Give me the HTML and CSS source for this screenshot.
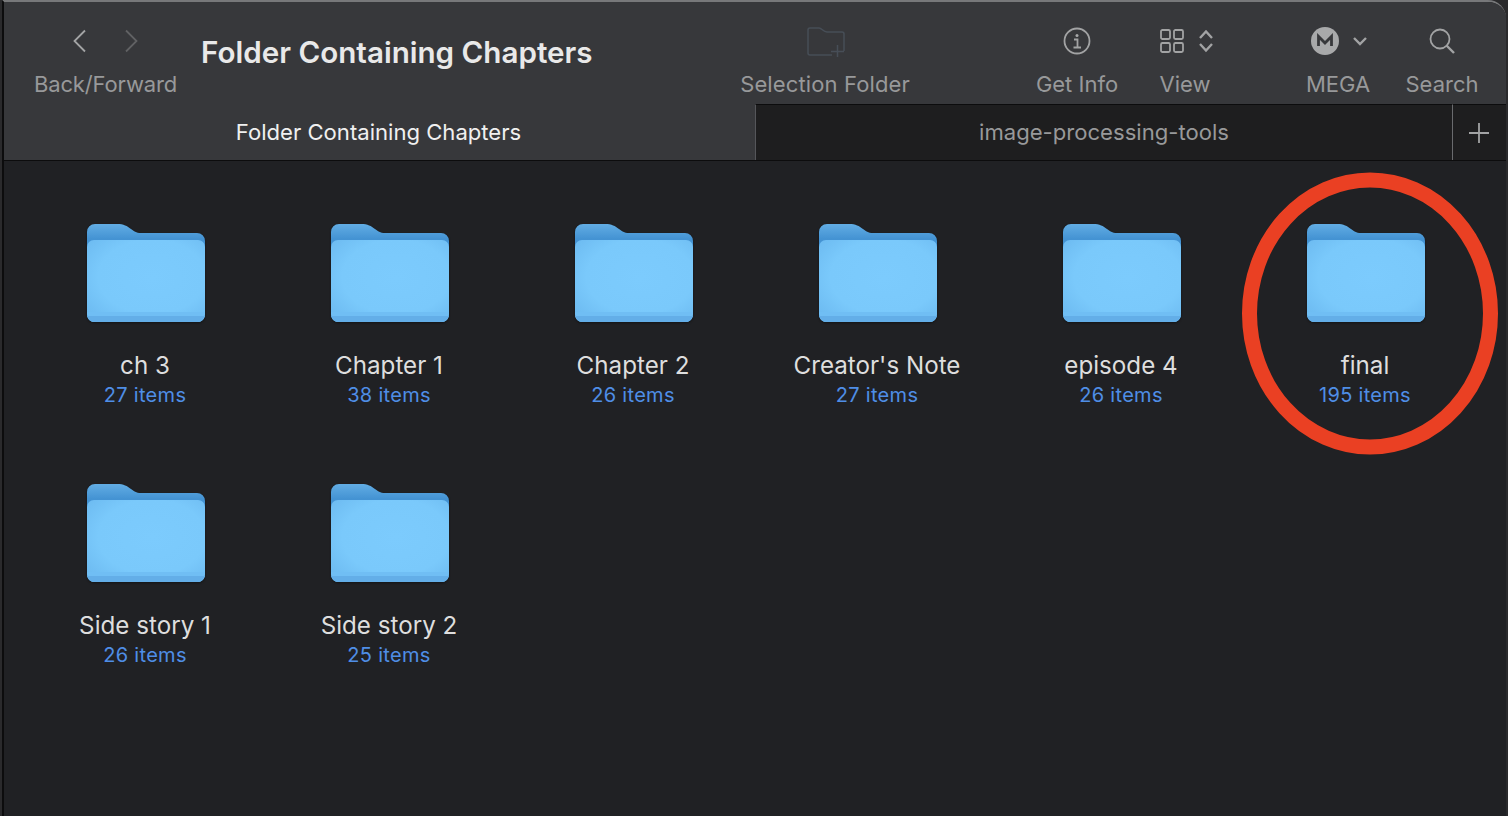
FILE: index.html
```html
<!DOCTYPE html>
<html lang="en">
<head>
  <meta charset="UTF-8">
  <title>Folder Containing Chapters</title>
  <link rel="stylesheet" href="styles.css">
</head>
<body>
  <svg class="defs" width="0" height="0">
    <defs>
      <linearGradient id="backGrad" x1="0" y1="0" x2="0" y2="1">
        <stop offset="0" stop-color="#62ade4"/>
        <stop offset="0.25" stop-color="#4493d3"/>
      </linearGradient>
      <radialGradient id="frontGrad" cx="0.55" cy="0.45" r="0.7">
        <stop offset="0" stop-color="#7ccbfd"/>
        <stop offset="0.65" stop-color="#7ac9fb"/>
        <stop offset="1" stop-color="#6dbbf1"/>
      </radialGradient>
      <symbol id="folder" viewBox="0 0 118 100">
        <path d="M0 9A8 8 0 0 1 8 1H30C37 1 40 3 44 6C47 8 49 10 54 10H110A8 8 0 0 1 118 18V60H0Z" fill="url(#backGrad)"/>
        <path d="M0 24A7 7 0 0 1 7 17H111A7 7 0 0 1 118 24V91A8 8 0 0 1 110 99H8A8 8 0 0 1 0 91Z" fill="url(#frontGrad)"/>
        <path d="M0 89H118V91A8 8 0 0 1 110 99H8A8 8 0 0 1 0 91Z" fill="#70bef4"/>
        <path d="M0 93H118A8 8 0 0 1 110 99H8A8 8 0 0 1 0 93Z" fill="#63aee8"/>
      </symbol>
    </defs>
  </svg>

  <div class="window">
    <header class="toolbar">
      <div class="tool tool-nav">
        <div class="tool-icon nav-icons">
          <svg width="16" height="24" viewBox="0 0 16 24"><path d="M13 1.500L2.500 12L13 22.500" class="stroke-light"/></svg>
          <svg width="16" height="24" viewBox="0 0 16 24"><path d="M3 1.500L13.500 12L3 22.500" class="stroke-dim"/></svg>
        </div>
        <span class="tool-label">Back/Forward</span>
      </div>
      <h1 class="window-title">Folder Containing Chapters</h1>
      <div class="tool tool-selection">
        <div class="tool-icon selection-icon">
          <svg width="38" height="32" viewBox="0 0 38 32"><path d="M25 28H3Q1 28 1 26V3Q1 1 3 1H12C15 1 16 5 20 5H35Q37 5 37 7V24M24 24.500H37M30.500 18V30" class="stroke-folder"/></svg>
        </div>
        <span class="tool-label">Selection Folder</span>
      </div>
      <div class="tool tool-info">
        <div class="tool-icon">
          <svg width="28" height="28" viewBox="0 0 28 28"><circle cx="14" cy="14" r="12.500" class="stroke-light"/><circle cx="14" cy="8.500" r="1.500" class="fill-light"/><path d="M11 12.500H14.500V20M10.500 20.500H18" class="stroke-light"/></svg>
        </div>
        <span class="tool-label">Get Info</span>
      </div>
      <div class="tool tool-view">
        <div class="tool-icon view-icons">
          <svg width="24" height="24" viewBox="0 0 24 24"><rect x="1" y="1" width="9" height="9" rx="1.500" class="stroke-light"/><rect x="14" y="1" width="9" height="9" rx="1.500" class="stroke-light"/><rect x="1" y="14" width="9" height="9" rx="1.500" class="stroke-light"/><rect x="14" y="14" width="9" height="9" rx="1.500" class="stroke-light"/></svg>
          <svg width="16" height="24" viewBox="0 0 16 24"><path d="M2 9L8 2.500L14 9M2 15L8 21.500L14 15" class="stroke-bold"/></svg>
        </div>
        <span class="tool-label">View</span>
      </div>
      <div class="tool tool-mega">
        <div class="tool-icon mega-icons">
          <svg width="28" height="28" viewBox="0 0 28 28"><circle cx="14" cy="14" r="14" class="fill-light"/><path d="M7.500 19V9.500L14 16L20.500 9.500V19" class="stroke-mega"/></svg>
          <svg width="14" height="10" viewBox="0 0 14 10"><path d="M1 2L7 8L13 2" class="stroke-bold"/></svg>
        </div>
        <span class="tool-label">MEGA</span>
      </div>
      <div class="tool tool-search">
        <div class="tool-icon">
          <svg width="26" height="26" viewBox="0 0 26 26"><circle cx="11" cy="11" r="9.500" class="stroke-light"/><path d="M17.500 17.500L25 25" class="stroke-bold"/></svg>
        </div>
        <span class="tool-label">Search</span>
      </div>
    </header>

    <nav class="tabbar">
      <div class="tab tab-active">Folder Containing Chapters</div>
      <div class="tab tab-other">image-processing-tools</div>
      <div class="tab-add">
        <svg width="22" height="22" viewBox="0 0 22 22"><path d="M11 1V21M1 11H21" class="stroke-light"/></svg>
      </div>
    </nav>

    <main class="grid">
      <div class="item">
        <svg class="folder"><use href="#folder"/></svg>
        <div class="item-name">ch 3</div>
        <div class="item-count">27 items</div>
      </div>
      <div class="item">
        <svg class="folder"><use href="#folder"/></svg>
        <div class="item-name">Chapter 1</div>
        <div class="item-count">38 items</div>
      </div>
      <div class="item">
        <svg class="folder"><use href="#folder"/></svg>
        <div class="item-name">Chapter 2</div>
        <div class="item-count">26 items</div>
      </div>
      <div class="item">
        <svg class="folder"><use href="#folder"/></svg>
        <div class="item-name">Creator's Note</div>
        <div class="item-count">27 items</div>
      </div>
      <div class="item">
        <svg class="folder"><use href="#folder"/></svg>
        <div class="item-name">episode 4</div>
        <div class="item-count">26 items</div>
      </div>
      <div class="item">
        <svg class="folder"><use href="#folder"/></svg>
        <div class="item-name">final</div>
        <div class="item-count">195 items</div>
      </div>
      <div class="item">
        <svg class="folder"><use href="#folder"/></svg>
        <div class="item-name">Side story 1</div>
        <div class="item-count">26 items</div>
      </div>
      <div class="item">
        <svg class="folder"><use href="#folder"/></svg>
        <div class="item-name">Side story 2</div>
        <div class="item-count">25 items</div>
      </div>
    </main>

    <svg class="annotation" width="270" height="295" viewBox="0 0 270 295">
      <ellipse cx="135" cy="147.500" rx="120.500" ry="133.500"/>
    </svg>
  </div>
</body>
</html>
```

FILE: styles.css
```css
* {
  box-sizing: border-box;
}
html, body {
  height: 100%;
}
body {
  margin: 0;
  padding-left: 2px;
  background-color: #2a2a2c;
  font-family: "Inter", "Noto Sans", sans-serif;
  overflow: hidden;
}
.defs {
  position: absolute;
}
.window {
  position: relative;
  height: 816px;
  width: 1504px;
  border-top: 2px solid #77787a;
  border-left: 2px solid #0c0c0d;
  border-top-right-radius: 18px;
  background-color: #202124;
  overflow: hidden;
}

/* toolbar */
.toolbar {
  display: flex;
  height: 102px;
  background-color: #37383b;
}
.tool {
  display: flex;
  flex-direction: column;
  align-items: center;
  flex: none;
  padding-top: 22px;
}
.tool-icon {
  display: flex;
  align-items: center;
  justify-content: center;
  height: 34px;
}
.tool-label {
  margin-top: 12px;
  font-size: 22px;
  line-height: 28px;
  color: #98999a;
  white-space: nowrap;
}
.tool-nav {
  width: 143px;
  margin-left: 30px;
}
.tool-nav .tool-label {
  letter-spacing: -0.15px;
}
.nav-icons {
  gap: 35px;
  margin-left: -1px;
}
.window-title {
  flex: none;
  width: 391px;
  margin: 32px 0 0 24px;
  font-size: 29.6px;
  line-height: 36px;
  font-weight: 600;
  color: #e9e9e9;
  white-space: nowrap;
}
.tool-selection {
  width: 170px;
  margin-left: 148px;
}
.tool-selection .tool-label {
  letter-spacing: 0.12px;
}
.selection-icon {
  padding-top: 4px;
  margin-left: 2px;
}
.tool-info {
  width: 84px;
  margin-left: 125px;
}
.tool-view {
  width: 50px;
  margin-left: 41px;
}
.view-icons {
  gap: 14px;
  margin-left: 3px;
}
.tool-mega {
  width: 64px;
  margin-left: 96px;
}
.mega-icons {
  gap: 14px;
  margin-left: 2px;
}
.tool-search {
  width: 72px;
  margin-left: 36px;
}

.stroke-light, .stroke-dim, .stroke-bold, .stroke-folder, .stroke-mega {
  fill: none;
}
.stroke-light {
  stroke: #a2a3a4;
  stroke-width: 1.8;
}
.stroke-dim {
  stroke: #606163;
  stroke-width: 1.8;
}
.stroke-bold {
  stroke: #a2a3a4;
  stroke-width: 2.4;
}
.stroke-folder {
  stroke: #474e57;
  stroke-width: 1.5;
}
.stroke-mega {
  stroke: #37383b;
  stroke-width: 2.8;
}
.fill-light {
  fill: #a8a9aa;
}

/* tabs */
.tabbar {
  display: flex;
  height: 57px;
  border-bottom: 1px solid #0c0c0d;
  font-size: 22.1px;
}
.tab {
  display: flex;
  align-items: center;
  justify-content: center;
}
.tab-active {
  width: 751px;
  padding: 0 2px 1px 0;
  background-color: #37383b;
  color: #f0f0f0;
}
.tab-other {
  width: 698px;
  padding-bottom: 1px;
  background-color: #1e1e1f;
  border-top: 1px solid #0c0c0d;
  border-left: 1px solid #55565a;
  border-right: 1px solid #6a6b6e;
  color: #98999a;
}
.tab-add {
  flex: 1;
  display: flex;
  align-items: center;
  justify-content: center;
  padding-right: 1px;
  background-color: #1e1e1f;
  border-top: 1px solid #0c0c0d;
}

/* folders */
.grid {
  display: grid;
  grid-template-columns: repeat(6, 244px);
  grid-auto-rows: 260px;
  padding: 62px 0 0 20px;
}
.item {
  display: flex;
  flex-direction: column;
  align-items: center;
}
.folder {
  width: 118px;
  height: 100px;
  filter: drop-shadow(0 1px 1px rgba(0, 0, 0, 0.4));
}
.item-name {
  margin-top: 26px;
  padding-right: 2px;
  font-size: 24.2px;
  line-height: 33px;
  color: #dedede;
  white-space: nowrap;
}
.item-count {
  padding-right: 2px;
  font-size: 20px;
  line-height: 26px;
  letter-spacing: 0.3px;
  color: #4f8ee6;
  white-space: nowrap;
}

/* red ring drawn over the screenshot */
.annotation {
  position: absolute;
  left: 1231px;
  top: 164px;
}
.annotation ellipse {
  fill: none;
  stroke: #ea4023;
  stroke-width: 15;
}
```
